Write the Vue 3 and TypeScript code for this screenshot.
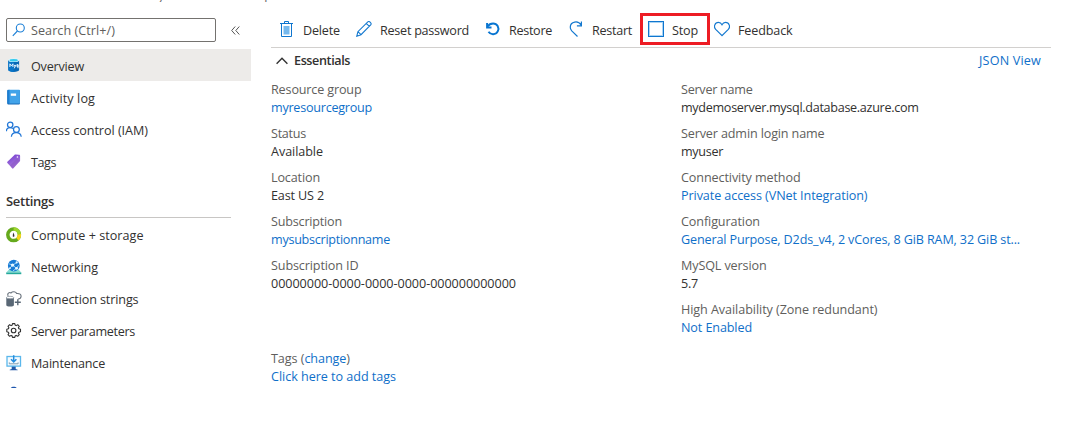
<script setup lang="ts">
import { nextTick, type Directive } from 'vue'

interface MenuItem { icon: string; label: string; width: number }
interface Field { label: string; labelWidth: number; value: string; valueWidth: number; link?: boolean }

const vFit: Directive<HTMLElement, number> = {
  mounted(el, binding) {
    const apply = () => {
      el.style.letterSpacing = '0px'
      const natural = el.getBoundingClientRect().width
      const count = (el.textContent ?? '').length
      if (count > 0) el.style.letterSpacing = `${(binding.value - natural) / count}px`
    }
    nextTick(apply)
    document.fonts.ready.then(apply)
  },
}

const general: MenuItem[] = [
  { icon: 'mysql', label: 'Overview', width: 53 },
  { icon: 'log', label: 'Activity log', width: 64 },
  { icon: 'people', label: 'Access control (IAM)', width: 117 },
  { icon: 'tag', label: 'Tags', width: 25 },
]
const settings: MenuItem[] = [
  { icon: 'compute', label: 'Compute + storage', width: 112.5 },
  { icon: 'network', label: 'Networking', width: 67 },
  { icon: 'connection', label: 'Connection strings', width: 107.5 },
  { icon: 'gear', label: 'Server parameters', width: 104 },
  { icon: 'maintenance', label: 'Maintenance', width: 74 },
]
const groups = [
  { title: '', items: general },
  { title: 'Settings', items: settings },
]
const commands: MenuItem[] = [
  { icon: 'delete', label: 'Delete', width: 37 },
  { icon: 'pencil', label: 'Reset password', width: 89 },
  { icon: 'restore', label: 'Restore', width: 43 },
  { icon: 'restart', label: 'Restart', width: 40 },
  { icon: 'stop', label: 'Stop', width: 26 },
  { icon: 'heart', label: 'Feedback', width: 54.5 },
]
const left: Field[] = [
  { label: 'Resource group', labelWidth: 90.5, value: 'myresourcegroup', valueWidth: 101, link: true },
  { label: 'Status', labelWidth: 35, value: 'Available', valueWidth: 52 },
  { label: 'Location', labelWidth: 49, value: 'East US 2', valueWidth: 53 },
  { label: 'Subscription', labelWidth: 71, value: 'mysubscriptionname', valueWidth: 119, link: true },
  { label: 'Subscription ID', labelWidth: 87.5, value: '00000000-0000-0000-0000-000000000000', valueWidth: 245 },
]
const right: Field[] = [
  { label: 'Server name', labelWidth: 71.5, value: 'mydemoserver.mysql.database.azure.com', valueWidth: 237.5 },
  { label: 'Server admin login name', labelWidth: 143.5, value: 'myuser', valueWidth: 42 },
  { label: 'Connectivity method', labelWidth: 119.5, value: 'Private access (VNet Integration)', valueWidth: 186.5, link: true },
  { label: 'Configuration', labelWidth: 79, value: 'General Purpose, D2ds_v4, 2 vCores, 8 GiB RAM, 32 GiB st...', valueWidth: 339, link: true },
  { label: 'MySQL version', labelWidth: 85.5, value: '5.7', valueWidth: 17 },
  { label: 'High Availability (Zone redundant)', labelWidth: 196.5, value: 'Not Enabled', valueWidth: 71, link: true },
]
</script>

<template>
  <div class="page">
    <div class="crumbs"><span>y</span><span>p</span></div>
    <aside class="side">
      <div class="search-row">
        <div class="search">
          <svg width="14" height="14" viewBox="0 0 14 14" fill="none" stroke="#1b7fd6" stroke-width="1.1"><circle cx="8.3" cy="5" r="4" /><path d="M5.4 8 .8 12.8" /></svg>
          <span v-fit="84">Search (Ctrl+/)</span>
        </div>
        <svg class="collapse" width="9" height="9" viewBox="0 0 9 9" fill="none" stroke="#555" stroke-width="1"><path d="M4.2.5.7 4.5l3.5 4M8.3.5 4.8 4.5l3.5 4" /></svg>
      </div>
      <nav v-for="group in groups" :key="group.title" :class="{ top: !group.title }">
        <h3 v-if="group.title"><span v-fit="48">{{ group.title }}</span></h3>
        <div v-for="item in group.items" :key="item.icon" class="item" :class="{ active: item.icon === 'mysql' }">
          <svg v-if="item.icon === 'mysql'" width="16" height="16" viewBox="0 0 16 16"><path d="M2.3 3.3v9.8c0 1 2.4 1.8 5.4 1.8s5.4-.8 5.4-1.8V3.3z" fill="#0868b5" /><path d="M2.3 3.3v9.8c0 1 2.4 1.8 5.4 1.8V3.3z" fill="#0875c8" /><ellipse cx="7.7" cy="3.2" rx="5.4" ry="1.9" fill="#dff5fc" /><ellipse cx="7.7" cy="3.3" rx="4.2" ry="1.3" fill="#35c9ed" /><path d="M3.9 10V6.8l1.5 2.1 1.5-2.1V10M8 7.7l1 2 1-2M9 9.6l-.7 1.7M12 7.7h-1v2h1V7.7v3.5" fill="none" stroke="#e5f4ff" stroke-width="1" /></svg>
          <svg v-else-if="item.icon === 'log'" width="16" height="16" viewBox="0 0 16 16"><rect x="1.3" y="1" width="12.6" height="14.5" rx="1" fill="#1769b5" /><rect x="2.7" y=".8" width="11.2" height="13.7" rx=".7" fill="#42a3e9" /><path d="M1.3 1.8c0-.6.4-1 1-1h1.2v13.7H1.3z" fill="#1c7fd2" /><rect x="4.8" y="4.5" width="5.3" height="2.3" fill="#fff" /></svg>
          <svg v-else-if="item.icon === 'people'" width="16" height="16" viewBox="0 0 16 16" fill="none" stroke="#2277d7" stroke-width="1.25"><circle cx="4.2" cy="3.8" r="2.7" /><path d="M.4 10.2c0-2.2 1.5-3.7 3.7-3.7 1.2 0 2.2.4 2.9 1.1" /><circle cx="10.4" cy="8.5" r="2.9" /><path d="M5.4 15.7c.1-2.6 2-4.2 4.8-4.2s4.8 1.6 5 4.2" /></svg>
          <svg v-else-if="item.icon === 'tag'" width="16" height="16" viewBox="0 0 16 16"><defs><linearGradient id="tagFill" x1="0" y1="0" x2=".5" y2="1"><stop stop-color="#6f35cf" /><stop offset="1" stop-color="#af83dc" /></linearGradient></defs><path d="M1.4 8.7 8.2 2.2c.5-.5.9-.6 1.5-.6l3.3.2c.7 0 1.1.4 1.1 1.1v4.5c0 .5-.2.9-.5 1.2l-6.1 6.7c-.4.4-.9.4-1.3 0L1.4 10c-.4-.4-.4-.9 0-1.3z" fill="url(#tagFill)" /><path d="m4.2 12.5 6.9-7 2.9 2.1-7 7.6c-.3.3-.6.3-.9 0z" fill="#8854c2" opacity=".55" /><circle cx="11.4" cy="4" r=".8" fill="#fff" /></svg>
          <svg v-else-if="item.icon === 'compute'" width="16" height="16" viewBox="0 0 16 16"><circle cx="7.6" cy="7.8" r="5.8" fill="#fff" stroke="#65a91d" stroke-width="3.5" /><path d="M7.6 2a5.8 5.8 0 0 1 5.7 5" fill="none" stroke="#9cd52c" stroke-width="3.5" /><path d="M13.3 7.2a5.8 5.8 0 0 1-1.9 5" fill="none" stroke="#f8d51b" stroke-width="3.5" /><path d="M7.2 5.4 8.4 8l-.2 1.8H6.8V8z" fill="#333" /></svg>
          <svg v-else-if="item.icon === 'network'" width="16" height="16" viewBox="0 0 16 16"><path d="M.2 13.6 3 10.5h9.5l2.8 3.1z" fill="#83ded4" /><path d="M.2 13.5h15.1v1.7H.2z" fill="#24a99b" /><circle cx="7.8" cy="6.7" r="5.9" fill="#187bd5" /><path d="m3 4.8 3.7 1.3 4.5-2.8M6.7 6.1l3.9 3.3 2-3.1M3.7 9.3l3-3.2M7 11.8l3.6-2.4" fill="none" stroke="#a7ddfa" stroke-width=".9" /><g fill="#e6f7ff"><circle cx="6.6" cy="6.1" r="1.7" /><circle cx="10.6" cy="9.3" r="1.4" /><circle cx="10.7" cy="3.4" r="1.1" /><circle cx="3.9" cy="9.2" r=".9" /></g></svg>
          <svg v-else-if="item.icon === 'connection'" width="16" height="16" viewBox="0 0 16 16"><path d="M2.2 4.9C.8 2.6 3.4.8 5 2c1.4-1.9 5-1.6 5.7.5 2.8-.3 4.8 1 4.3 3.2-.2 1.6-1.4 2.4-3 2.3" fill="none" stroke="#69727c" stroke-width="1.1" /><path d="M.3 6.5v7.8c0 .8 1.7 1.2 3.8 1.2s3.8-.4 3.8-1.2V6.5z" fill="#596775" /><ellipse cx="4.1" cy="6.5" rx="3.6" ry="1.2" fill="#fff" stroke="#8a949e" stroke-width=".8" /><path d="M8.8 11.3h6M11.8 8.3v6" stroke="#596775" stroke-width="1.4" /></svg>
          <svg v-else-if="item.icon === 'gear'" width="16" height="16" viewBox="0 0 16 16" fill="none" stroke="#303030" stroke-width="1.1" stroke-linejoin="round"><path d="m6.1 2.2.4-1.6h2.3l.4 1.6 1 .4 1.5-.9 1.6 1.6-.9 1.5.5 1 1.6.4v2.6l-1.6.4-.5 1 .9 1.5-1.6 1.6-1.5-.9-1 .4-.4 1.6H6.5l-.4-1.6-1-.4-1.5.9L2 11.7l.9-1.5-.5-1L.8 8.8V6.2l1.6-.4.5-1L2 3.3l1.6-1.6 1.5.9z" /><circle cx="7.6" cy="7.5" r="2.3" /></svg>
          <svg v-else width="16" height="16" viewBox="0 0 16 16"><path d="M5.7 11h4v3.1l2 .7v.5h-8v-.5l2-.7z" fill="#2459a7" /><rect x="1" y="1.5" width="13.5" height="9.6" fill="#f5fbff" stroke="#5ab7ec" stroke-width="1.3" /><path d="M7.7.2v6.3M5 4.2l2.7 2.7 2.7-2.7" fill="none" stroke="#258cdd" stroke-width="1.5" /><path d="M3.3 7.4v1.4h8.8V7.4" fill="none" stroke="#7f9bae" stroke-width="1" /></svg>
          <span v-fit="item.width">{{ item.label }}</span>
        </div>
      </nav>
      <svg class="peek" width="16" height="2" viewBox="0 0 16 2"><path d="M4.8 2C5.7.4 9.8.4 10.7 2z" fill="#1d56ad" /></svg>
    </aside>
    <main class="main">
      <div class="toolbar">
        <div v-for="cmd in commands" :key="cmd.icon" class="command" :class="{ marked: cmd.icon === 'stop' }">
          <svg v-if="cmd.icon === 'delete'" width="16" height="16" viewBox="0 0 16 16" fill="none" stroke="#0f76cf"><path d="M1 2.5h13M5.5 2.5v-2h4v2M2.5 3v12.5h10V3" /><path d="M4.5 5h6v8.5h-6z" fill="#76b9ed" stroke="none" /></svg>
          <svg v-else-if="cmd.icon === 'pencil'" width="16" height="16" viewBox="0 0 16 16" fill="none" stroke="#1378cf" stroke-width="1.1"><path d="m.8 15.2 1.1-4.5L11.8.9c1.5-1.2 4.3 1.4 2.9 3L5 13.7zM10.3 2.4l3 3M1.9 10.7 5 13.7" /></svg>
          <svg v-else-if="cmd.icon === 'restore'" width="16" height="16" viewBox="0 0 16 16" fill="none" stroke="#0875d1"><path d="M2.6 5.4C4 3.2 6 2.4 8.1 2.4a5.4 5.4 0 1 1-4.6 8.4" stroke-width="2" /><path d="M2.1 2v4.4h4.4" stroke-width="2" /></svg>
          <svg v-else-if="cmd.icon === 'restart'" width="16" height="16" viewBox="0 0 16 16" fill="none" stroke="#1378cf" stroke-width="1.2"><path d="M13.3 4.3C11.5 1.4 9.1.6 6.7 1.1 2.6 2 2 5.2 2.5 7.6c.3 1 .8 1.7 1.5 2.5l5.5 5.4M13.4.4v4.5H8.9" /></svg>
          <svg v-else-if="cmd.icon === 'stop'" width="16" height="16" viewBox="0 0 16 16"><rect x=".5" y=".5" width="15" height="15" fill="#fff" stroke="#0f76cf" /><rect x="1.5" y="1.5" width="13" height="13" fill="none" stroke="#a9d4f4" /></svg>
          <svg v-else width="16" height="16" viewBox="0 0 16 16" fill="none" stroke="#1378cf" stroke-width="1.2"><path d="M8 14.7 1.7 8.4C-.8 5.7 1 1.4 4.4 1.4 6.2 1.4 7.3 2.4 8 3.7c.7-1.3 1.8-2.3 3.6-2.3 3.4 0 5.2 4.3 2.7 7z" /></svg>
          <span v-fit="cmd.width">{{ cmd.label }}</span>
        </div>
      </div>
      <div class="essentials">
        <svg width="12" height="8" viewBox="0 0 12 8" fill="none" stroke="#333" stroke-width="1.4"><path d="M.6 6.8 6 1.3l5.4 5.5" /></svg>
        <b v-fit="56">Essentials</b>
        <a class="json"><span v-fit="62">JSON View</span></a>
      </div>
      <div class="details">
        <section>
          <div v-for="f in left" :key="f.label" class="field">
            <div class="label"><span v-fit="f.labelWidth">{{ f.label }}</span></div>
            <div :class="{ link: f.link }"><span v-fit="f.valueWidth">{{ f.value }}</span></div>
          </div>
          <div class="field tags">
            <div class="label"><span v-fit="79">Tags <i>(<span class="link">change</span>)</i></span></div>
            <div class="link"><span v-fit="125">Click here to add tags</span></div>
          </div>
        </section>
        <section>
          <div v-for="f in right" :key="f.label" class="field">
            <div class="label"><span v-fit="f.labelWidth">{{ f.label }}</span></div>
            <div :class="{ link: f.link }"><span v-fit="f.valueWidth">{{ f.value }}</span></div>
          </div>
        </section>
      </div>
    </main>
  </div>
</template>

<style>
body { margin: 0; background: #fff; }
</style>
<style scoped>
.page { position: relative; display: flex; width: 1084px; height: 422px; overflow: hidden; background: #fff; color: #323130; font: 12.6px/18px "Open Sans", "Noto Sans", sans-serif; white-space: nowrap; }
svg { display: block; flex: none; }
.crumbs { position: absolute; left: 158px; top: 0; height: 2px; width: 120px; overflow: hidden; display: flex; gap: 100px; line-height: 18px; color: #666; }
.crumbs span { margin-top: -13px; }
.side { width: 251px; height: 388px; overflow: hidden; flex: none; }
.search-row { display: flex; align-items: center; padding: 18px 0 7px 6px; }
.search { box-sizing: border-box; width: 210px; height: 24px; border: 1px solid #74726f; border-radius: 2px; display: flex; align-items: center; gap: 5px; padding-left: 5px; color: #605e5c; }
.search span { padding-top: 1px; }
.collapse { margin-left: 15px; }
.item { height: 32px; display: flex; align-items: center; gap: 9px; padding-left: 6px; }
.item > span { padding-top: 2px; }
.top .item > span { padding-top: 4px; }
.item.active { background: #edebe9; }
h3 { box-sizing: border-box; height: 41px; width: 225px; margin: 0 0 1px 6px; padding-top: 15px; border-bottom: 1px solid #c8c6c4; font-size: 13px; line-height: 18px; font-weight: 600; }
.peek { margin: 7px 0 0 6px; }
.main { margin-left: 20px; width: 780px; }
.toolbar { box-sizing: border-box; height: 48px; border-bottom: 1px solid #d2d0ce; display: flex; gap: 16px; padding: 13px 0 0 8px; }
.command { height: 32px; display: flex; align-items: center; gap: 8px; position: relative; }
.command > span { padding-top: 4px; }
.command.marked::after { content: ""; position: absolute; box-sizing: border-box; left: -8px; top: 0; width: 70px; height: 32px; border: 3px solid #ed1c24; }
.essentials { height: 25px; display: flex; align-items: center; padding-left: 5px; }
.essentials b { margin-left: 6px; font-weight: 600; }
.json { margin-left: auto; margin-right: 10px; }
.json, .link { color: #0f6fc9; }
.details { display: grid; grid-template-columns: 410px 1fr; padding-top: 8px; }
.field { height: 44px; }
.label { color: #605e5c; }
.label i { font-style: normal; }
.tags { margin-top: 49px; }
</style>
